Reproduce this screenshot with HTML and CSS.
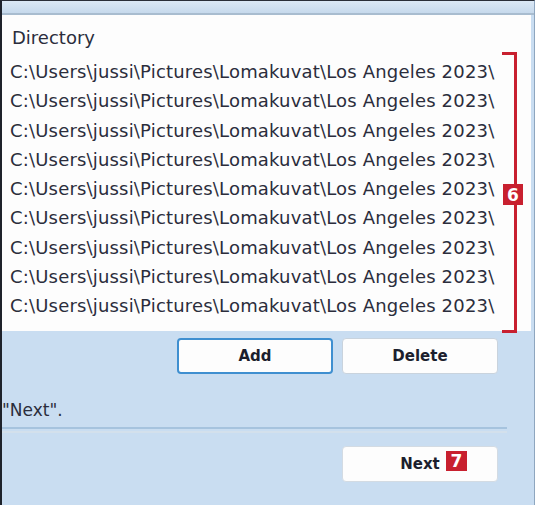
FILE: index.html
```html
<!DOCTYPE html>
<html>
<head>
<meta charset="utf-8">
<link rel="stylesheet" href="styles.css">
</head>
<body>
<div class="window">
  <div class="titleband"></div>
  <div class="listpanel">
    <div class="list">
      <div class="header">Directory</div>
      <div class="row">C:\Users\jussi\Pictures\Lomakuvat\Los Angeles 2023\</div>
      <div class="row">C:\Users\jussi\Pictures\Lomakuvat\Los Angeles 2023\</div>
      <div class="row">C:\Users\jussi\Pictures\Lomakuvat\Los Angeles 2023\</div>
      <div class="row">C:\Users\jussi\Pictures\Lomakuvat\Los Angeles 2023\</div>
      <div class="row">C:\Users\jussi\Pictures\Lomakuvat\Los Angeles 2023\</div>
      <div class="row">C:\Users\jussi\Pictures\Lomakuvat\Los Angeles 2023\</div>
      <div class="row">C:\Users\jussi\Pictures\Lomakuvat\Los Angeles 2023\</div>
      <div class="row">C:\Users\jussi\Pictures\Lomakuvat\Los Angeles 2023\</div>
      <div class="row">C:\Users\jussi\Pictures\Lomakuvat\Los Angeles 2023\</div>
    </div>
    <div class="bracket"></div>
    <div class="badge badge-six">6</div>
  </div>
  <div class="buttons">
    <button class="btn btn-focus">Add</button>
    <button class="btn">Delete</button>
  </div>
  <div class="hint">"Next".</div>
  <div class="separator"></div>
  <div class="footer">
    <button class="btn btn-next">Next<span class="badge badge-seven">7</span></button>
  </div>
</div>
</body>
</html>
```
FILE: styles.css
```css
html, body {
  margin: 0;
  padding: 0;
}
body {
  width: 535px;
  height: 505px;
  overflow: hidden;
  background: #c9ddf1;
  font-family: "DejaVu Sans", sans-serif;
  color: #2b2d3c;
}
.window {
  box-sizing: border-box;
  width: 535px;
  height: 505px;
  border-top: 1px solid #2a2e38;
  border-left: 2px solid #1e222b;
  border-right: 1px solid #8ea6bf;
  display: flex;
  flex-direction: column;
  background: #c9ddf1;
}
.titleband {
  height: 12px;
  background: linear-gradient(#dbe8f5, #c6d9ec);
  border-bottom: 2px solid #a8bccf;
}
.listpanel {
  position: relative;
  background: #fdfdfd;
  height: 316px;
  margin-right: 3px;
  padding: 8px 0 0 8px;
  box-sizing: border-box;
}
.header {
  height: 30px;
  line-height: 30px;
  font-size: 18px;
  padding-left: 2px;
  margin-bottom: 4px;
}
.row {
  height: 29.3px;
  line-height: 29.3px;
  font-size: 18px;
  letter-spacing: 0.18px;
  white-space: nowrap;
}
.bracket {
  position: absolute;
  left: 500px;
  top: 37px;
  width: 12px;
  height: 275px;
  border: 3px solid #c8202f;
  border-left: none;
}
.badge {
  background: #c8202f;
  color: #fff;
  font-family: "DejaVu Sans", sans-serif;
  font-weight: bold;
  font-size: 17px;
  display: flex;
  align-items: center;
  justify-content: center;
}
.badge-six {
  position: absolute;
  left: 501px;
  top: 169px;
  width: 20px;
  height: 21px;
}
.buttons {
  display: flex;
  justify-content: flex-end;
  gap: 9px;
  padding: 7px 36px 0 0;
}
.btn {
  box-sizing: border-box;
  width: 156px;
  height: 36px;
  background: #fdfdfd;
  border: 1px solid #c9d3dd;
  border-radius: 4px;
  font-family: "DejaVu Sans", sans-serif;
  font-weight: bold;
  font-size: 15px;
  color: #1c1f2e;
  padding: 0;
}
.btn-focus {
  border: 2px solid #3f8fd0;
}
.hint {
  margin-top: 26px;
  font-size: 17px;
  height: 20px;
  line-height: 20px;
}
.separator {
  margin-top: 7px;
  width: 505px;
  height: 2px;
  background: #a6c3de;
  box-shadow: 0 4px 0 0 #d3e0ec;
}
.footer {
  display: flex;
  justify-content: flex-end;
  padding: 17px 36px 0 0;
}
.btn-next {
  position: relative;
  border: 1px solid #d3dbe3;
  padding-left: 0;
}
.badge-seven {
  position: absolute;
  left: 103px;
  top: 4px;
  width: 21px;
  height: 20px;
}
```
